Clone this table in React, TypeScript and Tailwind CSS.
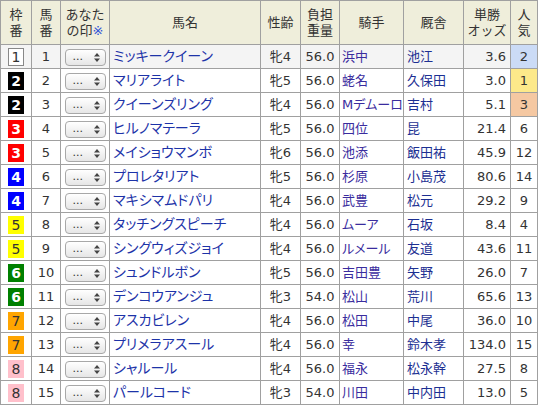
import React from 'react';

type Row = {
  w: number;
  n: number;
  name: string;
  sa: string;
  kg: string;
  j: string;
  t: string;
  o: string;
  p: number;
};

const ROWS: Row[] = [
  { w: 1, n: 1, name: 'ミッキークイーン', sa: '牝4', kg: '56.0', j: '浜中', t: '池江', o: '3.6', p: 2 },
  { w: 2, n: 2, name: 'マリアライト', sa: '牝5', kg: '56.0', j: '蛯名', t: '久保田', o: '3.0', p: 1 },
  { w: 2, n: 3, name: 'クイーンズリング', sa: '牝4', kg: '56.0', j: 'Mデムーロ', t: '吉村', o: '5.1', p: 3 },
  { w: 3, n: 4, name: 'ヒルノマテーラ', sa: '牝5', kg: '56.0', j: '四位', t: '昆', o: '21.4', p: 6 },
  { w: 3, n: 5, name: 'メイショウマンボ', sa: '牝6', kg: '56.0', j: '池添', t: '飯田祐', o: '45.9', p: 12 },
  { w: 4, n: 6, name: 'プロレタリアト', sa: '牝5', kg: '56.0', j: '杉原', t: '小島茂', o: '80.6', p: 14 },
  { w: 4, n: 7, name: 'マキシマムドパリ', sa: '牝4', kg: '56.0', j: '武豊', t: '松元', o: '29.2', p: 9 },
  { w: 5, n: 8, name: 'タッチングスピーチ', sa: '牝4', kg: '56.0', j: 'ムーア', t: '石坂', o: '8.4', p: 4 },
  { w: 5, n: 9, name: 'シングウィズジョイ', sa: '牝4', kg: '56.0', j: 'ルメール', t: '友道', o: '43.6', p: 11 },
  { w: 6, n: 10, name: 'シュンドルボン', sa: '牝5', kg: '56.0', j: '吉田豊', t: '矢野', o: '26.0', p: 7 },
  { w: 6, n: 11, name: 'デンコウアンジュ', sa: '牝3', kg: '54.0', j: '松山', t: '荒川', o: '65.6', p: 13 },
  { w: 7, n: 12, name: 'アスカビレン', sa: '牝4', kg: '56.0', j: '松田', t: '中尾', o: '36.0', p: 10 },
  { w: 7, n: 13, name: 'プリメラアスール', sa: '牝4', kg: '56.0', j: '幸', t: '鈴木孝', o: '134.0', p: 15 },
  { w: 8, n: 14, name: 'シャルール', sa: '牝4', kg: '56.0', j: '福永', t: '松永幹', o: '27.5', p: 8 },
  { w: 8, n: 15, name: 'パールコード', sa: '牝3', kg: '54.0', j: '川田', t: '中内田', o: '13.0', p: 5 },
];

// 枠色
const WAKU: Record<number, string> = {
  1: 'bg-white text-[#333] border border-[#888]',
  2: 'bg-black text-white font-bold',
  3: 'bg-[#ff0000] text-white font-bold',
  4: 'bg-[#0000ff] text-white font-bold',
  5: 'bg-[#ffff00] text-[#333]',
  6: 'bg-[#008000] text-white font-bold',
  7: 'bg-[#ffa500] text-[#333]',
  8: 'bg-[#ffc0cb] text-[#333]',
};

// 人気 1〜3 のハイライト
const NINKI: Record<number, string> = {
  1: 'bg-[#fde98a]',
  2: 'bg-[#cbdbf6]',
  3: 'bg-[#f5c8a2]',
};

const cell = 'border-r border-b border-[#a0a0a0] p-0';

function MarkSelect() {
  return (
    <div className="flex h-[17px] w-[41px] items-center justify-between rounded-[4px] border border-[#a8a8a8] bg-gradient-to-b from-white to-[#e6e6e6] pl-[7px] pr-[5px]">
      <span className="text-[11px] leading-none text-[#333] -mt-[2px]">...</span>
      <svg width="6" height="9" viewBox="0 0 6 9" className="text-[#444]">
        <path d="M3 0 L6 3.5 L0 3.5 Z" fill="currentColor" />
        <path d="M0 5.5 L6 5.5 L3 9 Z" fill="currentColor" />
      </svg>
    </div>
  );
}

export default function App() {
  return (
    <div className="w-[538px] h-[408px] bg-white overflow-hidden font-['DejaVu_Sans','Noto_Sans_CJK_JP',sans-serif] text-[13px] text-[#333]">
      <table className="table-fixed border-separate border-spacing-0 border-l border-t border-[#a0a0a0] w-[538px]">
        <colgroup>
          <col className="w-[31px]" />
          <col className="w-[29px]" />
          <col className="w-[49px]" />
          <col className="w-[151px]" />
          <col className="w-[40px]" />
          <col className="w-[39px]" />
          <col className="w-[64px]" />
          <col className="w-[60px]" />
          <col className="w-[47px]" />
          <col className="w-[27px]" />
        </colgroup>
        <thead>
          <tr className="bg-[#efeedb] h-[44px] leading-[16px] font-normal">
            <th className={`${cell} font-normal`}>枠<br />番</th>
            <th className={`${cell} font-normal`}>馬<br />番</th>
            <th className={`${cell} font-normal`}>
              あなた<br />の印<span className="text-[#2f55d8]">※</span>
            </th>
            <th className={`${cell} font-normal`}>馬名</th>
            <th className={`${cell} font-normal`}>性齢</th>
            <th className={`${cell} font-normal`}>負担<br />重量</th>
            <th className={`${cell} font-normal`}>騎手</th>
            <th className={`${cell} font-normal`}>厩舎</th>
            <th className={`${cell} font-normal`}>単勝<br />オッズ</th>
            <th className={`${cell} font-normal`}>人<br />気</th>
          </tr>
        </thead>
        <tbody>
          {ROWS.map((r, i) => (
            <tr key={r.n} className={`h-[24px] ${i === 0 ? 'bg-[#f4f4f4]' : 'bg-white'}`}>
              <td className={cell}>
                <div className="flex justify-center">
                  <span
                    className={`flex h-[18px] w-[16px] items-center justify-center text-[14px] leading-none ${WAKU[r.w]}`}
                  >
                    {r.w}
                  </span>
                </div>
              </td>
              <td className={`${cell} text-center`}>{r.n}</td>
              <td className={cell}>
                <div className="flex justify-center pt-[1px]">
                  <MarkSelect />
                </div>
              </td>
              <td className={`${cell} pl-[3px] text-[14px] text-[#1d33a8] [font-feature-settings:'palt'] whitespace-nowrap`}>
                {r.name}
              </td>
              <td className={`${cell} text-center`}>{r.sa}</td>
              <td className={`${cell} text-center`}>{r.kg}</td>
              <td className={`${cell} pl-[2px] text-[#3a2c9e] [font-feature-settings:'palt'] whitespace-nowrap`}>
                {r.j}
              </td>
              <td className={`${cell} pl-[3px] text-[#1c2f92]`}>{r.t}</td>
              <td className={`${cell} text-right pr-[4px]`}>{r.o}</td>
              <td className={`${cell} text-center ${NINKI[r.p] ?? ''}`}>{r.p}</td>
            </tr>
          ))}
        </tbody>
      </table>
    </div>
  );
}
